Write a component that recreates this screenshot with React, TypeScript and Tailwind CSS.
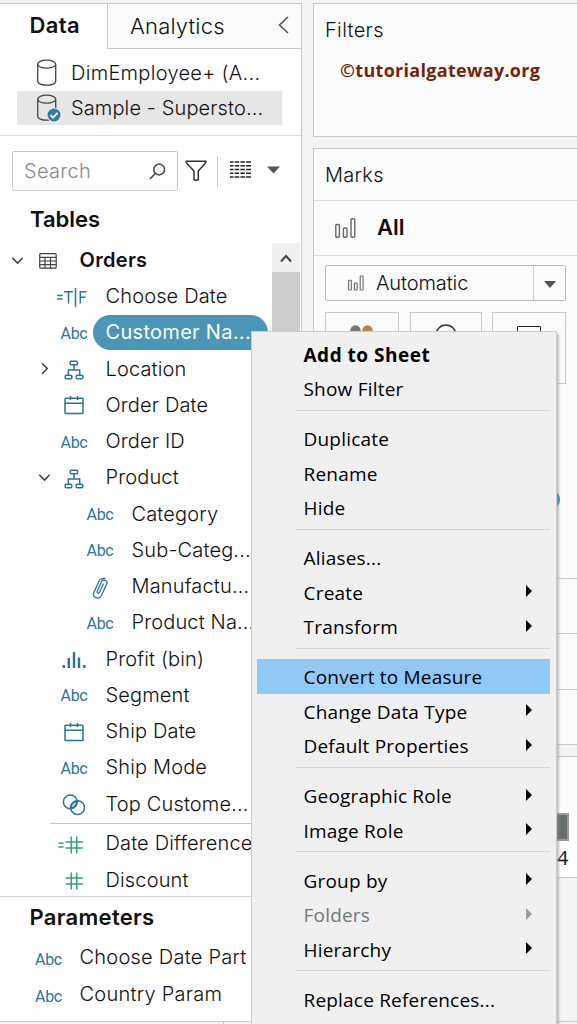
import React from "react";
import { clsx } from "clsx";

const AbcIcon = () => (
  <span className="font-['Roboto',sans-serif] text-[16px] leading-none font-normal tracking-[-0.3px] text-[#2a739c]">Abc</span>
);

const TrueFalseIcon = () => (
  <svg className="relative -left-[2px] -top-px" width="30" height="20" viewBox="0 0 30 20" fill="none" stroke="#2a739c" strokeWidth="1.5">
    <path d="M0 8.5h5.5M0 12h5.5M7 4.8h9M11.5 4.8v11.7M18.5 1v19M23.3 16.5V4.8h6.2M23.3 10.2h5.2" />
  </svg>
);

const HierarchyIcon = () => (
  <svg width="20" height="20" viewBox="0 0 20 20" fill="none" stroke="#2a739c" strokeWidth="1.5">
    <rect x="6.2" y="1.2" width="7.4" height="3.6" rx="1" />
    <rect x="1.2" y="15.2" width="6.6" height="3.6" rx="1" />
    <rect x="12.2" y="15.2" width="6.6" height="3.6" rx="1" />
    <path d="M10 5v5M4.3 15v-5h11.4v5" />
  </svg>
);

const CalendarIcon = () => (
  <svg className="relative -top-px" width="20" height="20" viewBox="0 0 20 20" fill="none" stroke="#2a739c" strokeWidth="1.5">
    <rect x="1" y="3.2" width="18" height="15.3" rx="0.8" />
    <path d="M1 8.3h18M6.5 1v4M13.5 1v4" />
  </svg>
);

const ClipIcon = () => (
  <svg width="18" height="22" viewBox="0 0 18 22" fill="none" stroke="#2a739c" strokeWidth="1.3" strokeLinecap="round">
    <path d="M12.3 7 8.6 15.2c-.7 1.6-3 .7-2.300-1L10.300 5c1.600-3.600 6.800-1.600 5.300 2.200L10.400 18.500c-2.200 4.600-9.600 2.300-7.600-2.900L7.600 4.900c1.300-2.700 3.600-4 6.400-3.500" />
  </svg>
);

const BinIcon = () => (
  <svg width="24" height="18" viewBox="0 0 24 18" fill="none" stroke="#2a739c" strokeWidth="2.4">
    <path d="M1.8 14v3M6.8 7v10M12 1v16M17 6.5v10.5M22.3 14v3" />
  </svg>
);

const SetIcon = () => (
  <svg width="24" height="22" viewBox="0 0 24 22" fill="none" stroke="#2a739c" strokeWidth="1.5">
    <path d="M8.5 14.5a7 7 0 0 1 6.5-7.500a7 7 0 0 1-6.500 7.500z" fill="#bfd3e0" />
    <circle cx="8.3" cy="7.9" r="6.9" />
    <circle cx="15.6" cy="13.7" r="6.9" />
  </svg>
);

const NumberIcon = ({ calc }: { calc?: boolean }) => (
  <svg className="relative -left-[3px]" width="26" height="18" viewBox="0 0 26 18" fill="none" stroke="#35a07c" strokeWidth="1.5">
    <path d="M7.5 6h17.500M7.500 12h17.500M13.200 .5v17M18.800 .5v17" />
    {calc && <path d="M.5 7.200h5M.5 11h5" />}
  </svg>
);

const Chevron = ({ open }: { open?: boolean }) => (
  <svg width="13" height="13" viewBox="0 0 13 13" fill="none" stroke="#444" strokeWidth="1.6">
    {open ? <path d="M1.3 3.800 6.500 9l5.200-5.200" /> : <path d="M4 1.300 9.200 6.500 4 11.700" />}
  </svg>
);

const Cylinder = ({ checked }: { checked?: boolean }) => (
  <svg width="24" height="28" viewBox="0 0 24 28" fill="none" stroke="#444" strokeWidth="1.3">
    <ellipse cx="9.7" cy="5.2" rx="9" ry="4" />
    <path d="M.7 5.200v17c0 2.300 4 4 9 4s9-1.700 9-4v-17" />
    {checked && (
      <>
        <circle cx="17" cy="21" r="7.4" fill="#e6e6e6" stroke="none" />
        <circle cx="17" cy="21" r="6.5" fill="#2f7ba8" stroke="none" />
        <path d="m13.500 21.200 2.500 2.400 4.500-4.800" stroke="#fff" strokeWidth="1.9" />
      </>
    )}
  </svg>
);

const Bars = ({ small }: { small?: boolean }) => (
  <svg width={small ? 16 : 21} height={small ? 16 : 20} viewBox="0 0 21 20" fill="none" stroke="#666" strokeWidth="1.4">
    <rect x=".8" y="6.5" width="3.6" height="12.7" rx="1" />
    <rect x="8.4" y="10" width="3.6" height="9.2" rx="1" />
    <rect x="16" y=".8" width="3.8" height="18.4" rx="1" />
  </svg>
);

const fields = [
  { name: "Choose Date", icon: <TrueFalseIcon /> },
  { name: "Customer Na...", icon: <AbcIcon />, selected: true },
  { name: "Location", icon: <HierarchyIcon />, chevron: <Chevron /> },
  { name: "Order Date", icon: <CalendarIcon /> },
  { name: "Order ID", icon: <AbcIcon /> },
  { name: "Product", icon: <HierarchyIcon />, chevron: <Chevron open /> },
  { name: "Category", icon: <AbcIcon />, nested: true },
  { name: "Sub-Categ...", icon: <AbcIcon />, nested: true },
  { name: "Manufactu...", icon: <ClipIcon />, nested: true },
  { name: "Product Na...", icon: <AbcIcon />, nested: true },
  { name: "Profit (bin)", icon: <BinIcon /> },
  { name: "Segment", icon: <AbcIcon /> },
  { name: "Ship Date", icon: <CalendarIcon /> },
  { name: "Ship Mode", icon: <AbcIcon /> },
  { name: "Top Custome...", icon: <SetIcon /> },
];

const measures = [
  { name: "Date Difference", icon: <NumberIcon calc /> },
  { name: "Discount", icon: <NumberIcon /> },
];

const menuGroups = [
  [{ label: "Add to Sheet", bold: true }, { label: "Show Filter" }],
  [{ label: "Duplicate" }, { label: "Rename" }, { label: "Hide" }],
  [{ label: "Aliases..." }, { label: "Create", sub: true }, { label: "Transform", sub: true }],
  [
    { label: "Convert to Measure", active: true },
    { label: "Change Data Type", sub: true },
    { label: "Default Properties", sub: true },
  ],
  [{ label: "Geographic Role", sub: true }, { label: "Image Role", sub: true }],
  [{ label: "Group by", sub: true }, { label: "Folders", sub: true, disabled: true }, { label: "Hierarchy", sub: true }],
  [{ label: "Replace References..." }],
];

const FieldRow = ({ field }: { field: any }) => (
  <div className={clsx("flex h-[36.25px] shrink-0 items-center whitespace-nowrap", field.nested && "pl-[26px]")}>
    <div className="flex w-[55px] shrink-0 justify-end pr-[4px]">{field.chevron}</div>
    <div className="flex w-[38px] shrink-0 justify-center pt-[3px]">{field.icon}</div>
    <div
      className={clsx(
        "flex h-[35px] items-center rounded-full pl-[12.5px]",
        field.selected && "w-[175px] bg-[#4b96b7] font-normal tracking-[0.3px] text-white"
      )}
    >
      {field.name}
    </div>
  </div>
);

const DataPane = () => (
  <div className="flex w-[302px] shrink-0 flex-col border-r border-[#c8c8c8] bg-white">
    <div className="flex h-[46px] shrink-0 border-t border-[#c8c8c8] text-[22px]">
      <div className="flex w-[107px] items-center pl-[29.5px] pb-0.5 font-semibold tracking-[0.4px]">Data</div>
      <div className="flex flex-1 items-center justify-between border-b-[1.5px] border-l-[1.5px] border-[#c8c8c8] bg-[#fafcfb] pl-[22px] pr-3">
        <span className="tracking-[0.2px]">Analytics</span>
        <svg className="relative -top-px" width="11" height="18" viewBox="0 0 11 18" fill="none" stroke="#555" strokeWidth="1.6">
          <path d="M10 1 1.5 9 10 17" />
        </svg>
      </div>
    </div>
    <div className="flex h-[87px] shrink-0 flex-col border-b border-[#dcdcdc] pt-[6px]">
      <div className="flex h-[36px] items-center pl-[37px]">
        <Cylinder />
        <span className="pl-2.5 tracking-[0.3px]">DimEmployee+ (A...</span>
      </div>
      <div className="ml-[17px] flex h-[34px] w-[265px] items-center bg-[#e6e6e6] pl-5">
        <Cylinder checked />
        <span className="pl-2.5 tracking-[0.12px]">Sample - Supersto...</span>
      </div>
    </div>
    <div className="flex h-[70px] shrink-0 items-center pl-3">
      <div className="flex h-10 w-[166px] items-center justify-between rounded-[2px] border-[1.5px] border-[#c8c8c8] pl-[11px] pr-[11px] text-[#888]">
        <span className="tracking-[0.3px]">Search</span>
        <svg width="17" height="17" viewBox="0 0 17 17" fill="none" stroke="#444" strokeWidth="1.5">
          <circle cx="10.2" cy="6.5" r="5.4" />
          <path d="M6.3 10.5 1 16" />
        </svg>
      </div>
      <svg className="ml-[7px]" width="22" height="22" viewBox="0 0 22 22" fill="none" stroke="#333" strokeWidth="1.5" strokeLinejoin="round">
        <path d="M1 1.200h20c0 1-.5 1.800-1.200 2.500L13.300 11v8.500c0 1-4.300 1-4.300 0V11L2.200 3.700C1.500 3 1 2.200 1 1.200z" />
      </svg>
      <div className="ml-[10px] h-[31px] w-px bg-[#ccc]" />
      <svg className="relative -top-[2px] ml-3" width="21" height="17" viewBox="0 0 21 17" stroke="#222" strokeWidth="1.5">
        <path
          d="M0 1h21M0 4.700h21M0 8.500h21M0 12.300h21M0 16h21"
          strokeDasharray="3.5 1.2 4.5 1.2 4.5 1.2 4.9 20"
        />
      </svg>
      <svg className="relative -top-px ml-4" width="13" height="8" viewBox="0 0 13 8" fill="#555">
        <path d="M0 .5h13L6.5 7.500z" />
      </svg>
    </div>
    <div className="flex h-9 shrink-0 items-start pl-[30px] pt-px text-[22px] leading-6 font-semibold">Tables</div>
    <div className="flex h-[655px] shrink-0 overflow-hidden border-b border-[#d4d4d4]">
      <div className="flex w-[272px] shrink-0 flex-col tracking-[0.15px]">
        <div className="flex h-9 shrink-0 items-center pl-[11px] font-semibold">
          <Chevron open />
          <svg className="ml-[15px] mt-0.5" width="18" height="16" viewBox="0 0 18 16" fill="none" stroke="#444" strokeWidth="1.2">
            <rect x=".7" y=".7" width="16.5" height="14.5" rx="1" />
            <path d="M1 4.300h16M1 8h16M1 11.600h16M6 4.300v11M11.500 4.300v11" />
          </svg>
          <span className="pl-[22.5px] tracking-[0.3px]">Orders</span>
        </div>
        {fields.map((field) => (
          <FieldRow key={field.name} field={field} />
        ))}
        <div className="mt-px ml-[50px] mb-[1.5px] h-px shrink-0 bg-[#c8c8c8]" />
        {measures.map((field) => (
          <FieldRow key={field.name} field={field} />
        ))}
      </div>
      <div className="mt-px flex w-[28px] flex-col bg-[#cdcdcd]">
        <div className="flex h-[29px] items-center justify-center bg-[#f0f0f0] pt-0.5">
          <svg width="12" height="9" viewBox="0 0 12 9" fill="none" stroke="#444" strokeWidth="2">
            <path d="M1 7.500 6 2l5 5.500" />
          </svg>
        </div>
      </div>
    </div>
    <div className="flex h-[42px] shrink-0 items-center pl-[29.5px] pb-0.5 text-[22px] font-semibold tracking-[0.3px]">Parameters</div>
    {["Choose Date Part", "Country Param"].map((name) => (
      <div key={name} className="flex h-[36.5px] shrink-0 items-center pl-[35px] tracking-[0.25px]">
        <div className="w-[44.5px] pt-0.5">
          <AbcIcon />
        </div>
        {name}
      </div>
    ))}
    <div className="mt-auto h-[3px] border-t border-[#c8c8c8] bg-[#f4f4f4] pl-[223px]">
      <div className="h-full w-px bg-[#c8c8c8]" />
    </div>
  </div>
);

const Shelves = () => (
  <div className="ml-[11px] flex w-[300px] shrink-0 flex-col">
    <div className="h-[134px] shrink-0 border border-[#c8c8c8] bg-[#fafcfb] pl-[11px] pt-[11px]">
      <div className="leading-[30px] tracking-[0.35px]">Filters</div>
      <div className="pl-[15px] pt-[13px] font-['Open_Sans',sans-serif] text-[18px] leading-6 font-bold tracking-[0.3px] text-[#7a1f0a]">
        ©tutorialgateway.org
      </div>
    </div>
    <div className="mt-[11px] flex h-[597px] shrink-0 flex-col border border-[#c8c8c8] bg-[#fafcfb]">
      <div className="flex h-[52px] shrink-0 items-center border-b border-[#dcdcdc] pl-[11px] tracking-[0.3px]">Marks</div>
      <div className="flex h-[55px] shrink-0 items-center border-b border-[#dcdcdc] pl-[21px] text-[22px] font-semibold">
        <Bars />
        <span className="relative -top-px pl-[21px]">All</span>
      </div>
      <div className="ml-[11px] mt-[9px] flex h-[36px] w-[241px] shrink-0 items-center rounded-[2px] border border-[#bbb] pl-[22px]">
        <Bars small />
        <span className="flex-1 pl-[12px] tracking-[-0.1px]">Automatic</span>
        <div className="flex h-full w-8 items-center justify-center border-l border-[#ccc] pt-0.5">
          <svg width="12" height="7" viewBox="0 0 12 7" fill="#555">
            <path d="M0 0h12L6 7z" />
          </svg>
        </div>
      </div>
      <div className="ml-[11px] mt-[11px] flex h-[72px] w-[241px] shrink-0 justify-between">
        <div className="flex w-[74px] justify-center border border-[#c8c8c8] pt-[11px]">
          <svg width="24" height="24" viewBox="0 0 24 24">
            <circle cx="5.5" cy="6.5" r="5.2" fill="#777" />
            <circle cx="17.5" cy="6.5" r="5.2" fill="#b98455" />
          </svg>
        </div>
        <div className="flex w-[72px] justify-center border border-[#c8c8c8] pt-[11px]">
          <svg width="22" height="22" viewBox="0 0 22 22" fill="none" stroke="#333" strokeWidth="1.5">
            <circle cx="11" cy="11" r="10" />
          </svg>
        </div>
        <div className="flex w-[74px] justify-center border border-[#c8c8c8] pt-[13px]">
          <div className="h-5 w-6 rounded-[1px] border-[1.5px] border-[#222]" />
        </div>
      </div>
      <div className="ml-[230px] mt-[107px] h-[17px] w-[16px] shrink-0 rounded-full bg-[#359fbd]" />
      <div className="mt-[70px] h-[56px] shrink-0 border-y border-[#c8c8c8]" />
      <div className="h-[56px] shrink-0 border-b border-[#c8c8c8]" />
    </div>
    <div className="mt-[11px] flex h-[122px] shrink-0 flex-col border border-[#c8c8c8] bg-white">
      <div className="h-[50px] shrink-0 bg-[#fafcfb]" />
      <div className="ml-[199px] mt-[6px] h-[28px] w-[56px] shrink-0 border-2 border-[#999] bg-[#666f6c]" />
      <div className="ml-[243px] mt-[4px] font-['Open_Sans',sans-serif] text-[20px] leading-[26px] font-normal">4</div>
    </div>
    <div className="mt-auto h-[3px] border-t border-[#c8c8c8]" />
  </div>
);

const ContextMenu = () => (
  <div className="absolute left-[251px] top-[331px] h-[700px] w-[306px] border border-[#ccc] bg-[#f0f0f0] pl-[5px] pr-[6px] pt-[4.5px] font-['Open_Sans',sans-serif] text-[19px] font-normal tracking-[0.2px] text-black shadow-[2px_3px_2px_#8888]">
    {menuGroups.map((group, i) => (
      <div key={i}>
        {i > 0 && <div className="mt-[4px] mb-[10.5px] ml-[39px] h-px bg-[#d4d4d4]" />}
        {group.map((item: any) => (
          <div
            key={item.label}
            className={clsx(
              "flex h-[34.5px] items-center justify-between pl-[46.5px] pr-[18px] pt-[2px] whitespace-nowrap",
              item.bold && "font-bold tracking-[0.5px]",
              item.active && "bg-[#90c8f6]",
              item.disabled && "text-[#6d7878]"
            )}
          >
            {item.label}
            {item.sub && (
              <svg className="-mt-[3px]" width="6" height="12" viewBox="0 0 6 12" fill={item.disabled ? "#a09a96" : "#000"}>
                <path d="M0 0 6 6 0 12z" />
              </svg>
            )}
          </div>
        ))}
      </div>
    ))}
  </div>
);

const App = () => {
  return (
    <div className="relative flex h-[1024px] w-[577px] overflow-hidden bg-[#f4f4f4] pt-[3px] font-['Inter',sans-serif] text-[20px] font-light text-[#111]">
      <DataPane />
      <Shelves />
      <ContextMenu />
    </div>
  );
};

export default App;
